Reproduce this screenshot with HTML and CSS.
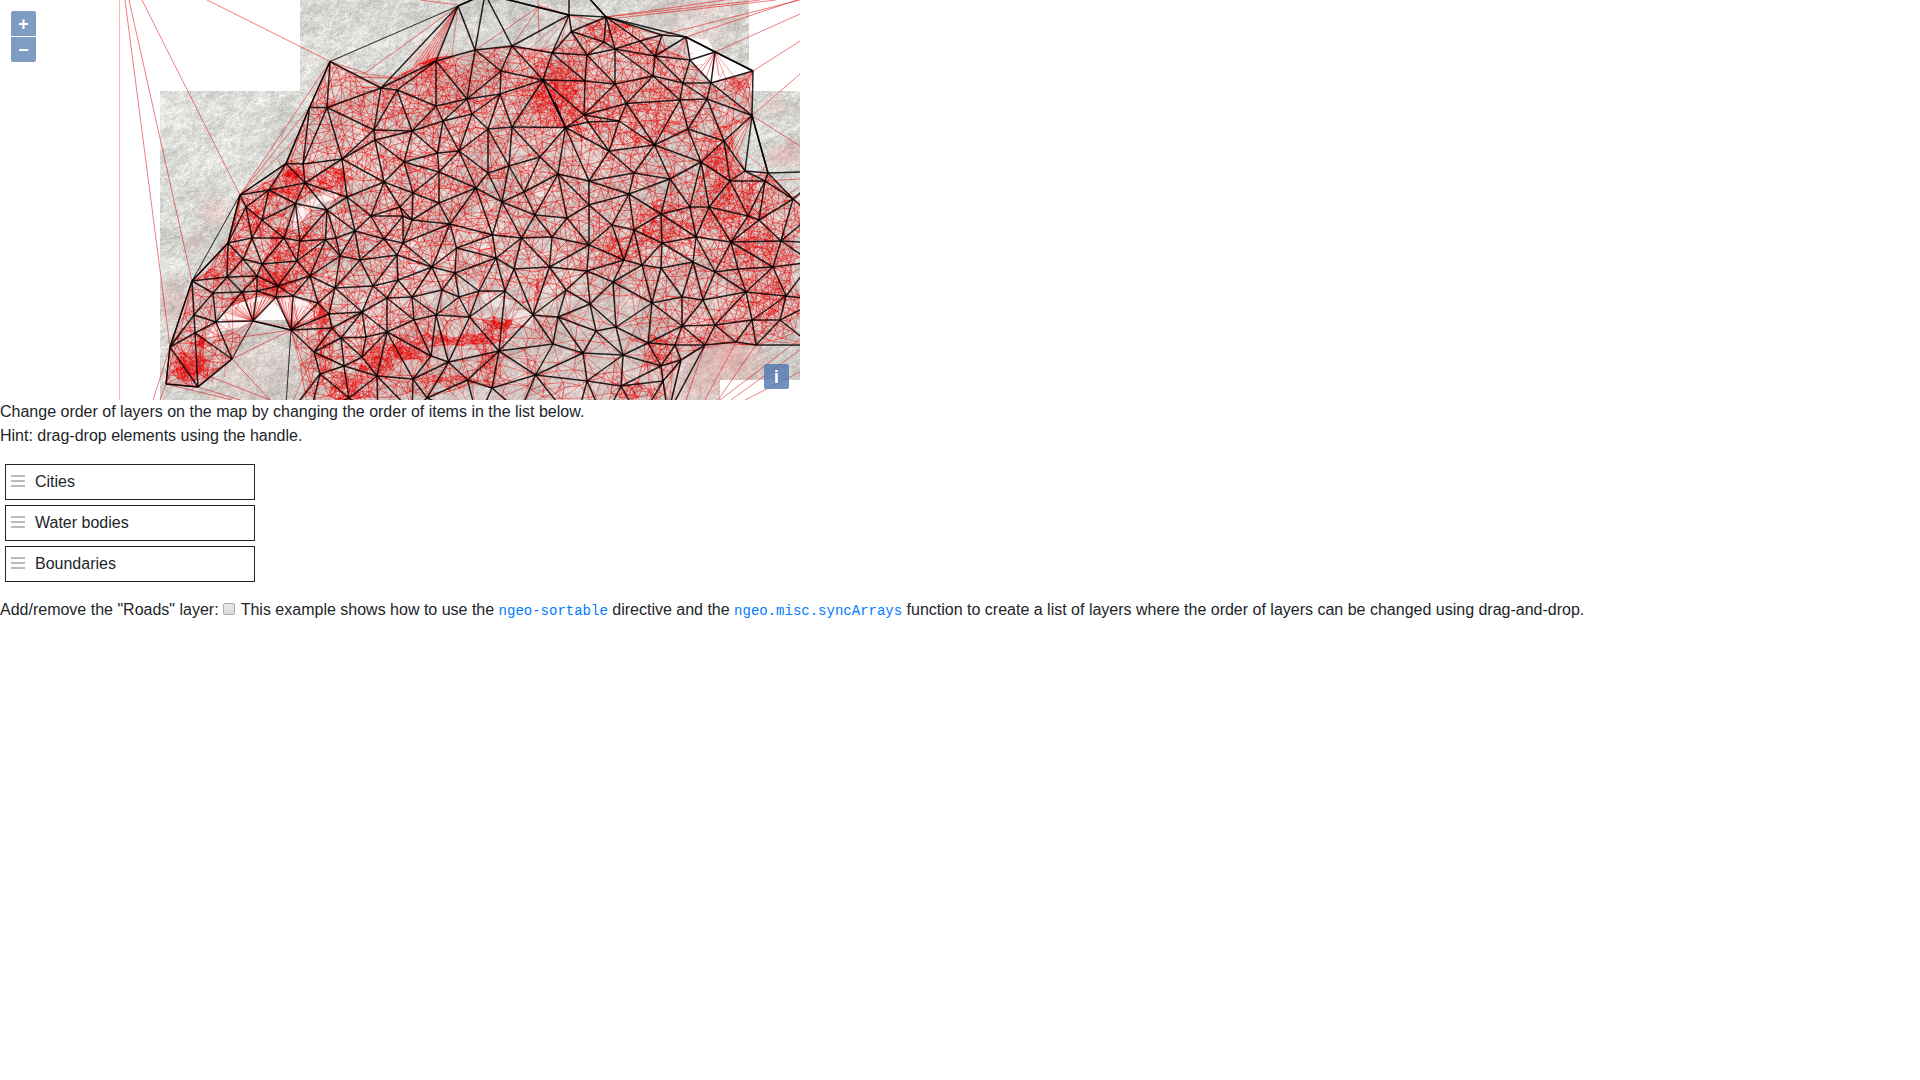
FILE: index.html
```html
<!DOCTYPE html>
<html lang="en">
<head>
<meta charset="utf-8">
<title>Sortable layers example</title>
<link rel="stylesheet" href="styles.css">
</head>
<body>
<div class="map">
  <canvas class="map-canvas" id="map" width="800" height="400"></canvas>
  <div class="zoom-control"><button type="button" title="Zoom in">+</button><button type="button" title="Zoom out">−</button></div>
  <button type="button" class="info-control" title="Attributions">i</button>
</div>
<p class="intro">Change order of layers on the map by changing the order of items in the list below.<br>Hint: drag-drop elements using the handle.</p>
<ul class="layers">
  <li><svg class="handle" viewBox="0 0 14 12"><path d="M0 1h14M0 6h14M0 11h14"/></svg>Cities</li>
  <li><svg class="handle" viewBox="0 0 14 12"><path d="M0 1h14M0 6h14M0 11h14"/></svg>Water bodies</li>
  <li><svg class="handle" viewBox="0 0 14 12"><path d="M0 1h14M0 6h14M0 11h14"/></svg>Boundaries</li>
</ul>
<p class="desc"><label for="roads">Add/remove the "Roads" layer:</label> <input type="checkbox" id="roads"> This example shows how to use the <a><code>ngeo-sortable</code></a> directive and the <a><code>ngeo.misc.syncArrays</code></a> function to create a list of layers where the order of layers can be changed using drag-and-drop.</p>
<script src="map.js"></script>
</body>
</html>
```
FILE: styles.css
```css
*, *::before, *::after { box-sizing: border-box; }
body {
  margin: 0;
  font: 16px/24px "Liberation Sans", Arial, sans-serif;
  color: #212529;
  background: #fff;
}
.map { position: relative; width: 800px; height: 400px; overflow: hidden; }
.map-canvas { display: block; }
.zoom-control { position: absolute; left: 11px; top: 11px; display: grid; gap: 1px; }
.map button {
  display: block;
  width: 25px;
  height: 25px;
  margin: 0;
  padding: 1px 0 0;
  border: 0;
  background: #7f9dc3;
  color: #fff;
  font: bold 18px/24px "Liberation Sans", Arial, sans-serif;
  text-align: center;
}
.zoom-control button:first-child { border-radius: 2px 2px 0 0; }
.zoom-control button:last-child { border-radius: 0 0 2px 2px; }
.map .info-control { position: absolute; right: 11px; bottom: 11px; border-radius: 2px; background: rgba(82, 121, 178, .82); }
.intro { margin: 0 0 16px; }
.layers { display: grid; gap: 5px; width: 250px; margin: 0 0 16px 5px; padding: 0; list-style: none; }
.layers li { display: flex; align-items: center; gap: 10px; height: 36px; padding: 0 5px; border: 1px solid #212529; }
.handle { width: 14px; height: 12px; margin-bottom: 2px; stroke: #bbb; stroke-width: 2; }
.desc { margin: 0; }
.desc input {
  appearance: none;
  width: 12px;
  height: 12px;
  margin: 0 1.5px 0 0;
  border: 1px solid #aaa;
  border-radius: 2px;
  background: linear-gradient(#e9e9e9, #dadada);
}
.desc code { font: 14px "Liberation Mono", "Courier New", monospace; color: #007bff; }
```
FILE: map.js
```javascript
const canvas = document.getElementById('map');
const ctx = canvas.getContext('2d');
let seed = 48271;
const rnd = () => (seed = (seed * 16807) % 2147483647) / 2147483647;

const parse = s => s.trim().split(/\s+/).map(p => p.split(',').map(Number));
const nodes = parse(`
330,61.5 309.5,107.5 327,107.5 381,88 397,90 374,130 375,140 342,159 303,164 286,163.5 269,190 305,183
240,195 347,197 246,207 295.5,203.5 327,210 371,216 262,220 228,243 252,238 284,238 325.5,239.5 300,241
336,238 355,231 384,239 340,256 360,260 397,255 297,261 243,259 262,264 310,276 335,288 373,286 227,277
257,276 278,286 192,281 213,293 242,292 257,291 276,297 293,296 318,303 329,314 362,312 387,298 194,315
216,322 253,321 291,330 332,328 366,337 387,332 195,333 170,347 232,359 166,384 198,387 341,338 314,352
362,357 344,366 320,374 377,376 349,398 458,6 436,61 436,106 475,50 512,46 501,71 500,94 467,99 472,114
543,80 412,131 443,121 437.5,153 459,151 488,129 512,127 404,162 384,182 439,172 488,173 509,166 540,157
413,193 476,188 524,192 400,207 403,216 412,220 439,203 450,224 502,202 535,215 521.5,238 492.5,235
403,243 432,267 456.5,248 455,273 496,258 514,269 549.5,267 398,280 442,290 479,291 459,297 412,297
505,291 436,315 414,320 469.5,317 533,315 431,356 448.5,362 413,379 499,351 535.5,375 467.5,380 492,388
427,398 569,15 571.5,31.5 606,17 604,42 552,53 587,55 615,49 640,41 662,35 686,37 655,56 653,76 690,60
715,52 711,83 683,83 753,71 707,99 680,100 752,115.5 626.5,103.5 615,84 585,81 584,115 588,122 619,121
565.5,127.5 688,129 724,141 609,151 654.5,145 701,162 745,171 768,173 730,181 765,181 558,174 634,173
670,179 589,181 629,194 793,199 589,205 567,218 612,225 634,230 661,214 690,207 709,207 748,216 759,220
781,241 731,242 696,237 662,243 589,245 552,237 624,260 642,265 661,268 693,262 715,272 738,269 773,267
587,271 613,282 566,290 590,304 652,303 682,297 703,300 746,292 786,296 752,320 780,320 715,325 682,326
596,331 616,327 558,317 553,344 648,343 675,345 705,345 736,342 756,345 583,353 623,355 661,366 681,360
587,381 621,386 663,381 485,-6 569,-24 825,171 812,215 818,243 812,262 820,300 812,345 285,420 310,415
378,418 412,412 478,420 520,412 575,425 604,420 640,420 668,414`);

// Delaunay triangulation, sweeping the points from left to right
function triangulate(input) {
  const pts = input.slice().sort((a, b) => a[0] - b[0]);
  const n = pts.length;
  pts.push([-9000, -9000], [400, 18000], [9800, -9000]);
  const circle = (i, j, k) => {
    const [ax, ay] = pts[i], [bx, by] = pts[j], [cx, cy] = pts[k];
    const d = 2 * (ax * (by - cy) + bx * (cy - ay) + cx * (ay - by)) || 1e-9;
    const a = ax * ax + ay * ay, b = bx * bx + by * by, c = cx * cx + cy * cy;
    const x = (a * (by - cy) + b * (cy - ay) + c * (ay - by)) / d;
    const y = (a * (cx - bx) + b * (ax - cx) + c * (bx - ax)) / d;
    return { t: [i, j, k], x, y, r: (ax - x) ** 2 + (ay - y) ** 2 };
  };
  let open = [circle(n, n + 1, n + 2)];
  const done = [];
  for (let p = 0; p < n; p++) {
    const [x, y] = pts[p];
    const border = new Map();
    const next = [];
    for (const c of open) {
      const dx = x - c.x;
      if (dx > 0 && dx * dx > c.r) { done.push(c); continue; }
      if (dx * dx + (y - c.y) ** 2 >= c.r) { next.push(c); continue; }
      for (const [a, b] of [[0, 1], [1, 2], [2, 0]]) {
        const u = Math.min(c.t[a], c.t[b]), v = Math.max(c.t[a], c.t[b]), key = u * 100000 + v;
        if (border.has(key)) border.delete(key); else border.set(key, [u, v]);
      }
    }
    for (const [u, v] of border.values()) next.push(circle(u, v, p));
    open = next;
  }
  const edges = new Map();
  for (const c of done.concat(open)) {
    for (const [a, b] of [[0, 1], [1, 2], [2, 0]]) {
      const u = Math.min(c.t[a], c.t[b]), v = Math.max(c.t[a], c.t[b]);
      if (v < n) edges.set(u * 100000 + v, [pts[u], pts[v]]);
    }
  }
  return [...edges.values()];
}

function polygon(s) {
  const p = new Path2D();
  parse(s).forEach(([x, y], i) => i ? p.lineTo(x, y) : p.moveTo(x, y));
  p.closePath();
  return p;
}

// shaded relief tiles
const image = ctx.createImageData(800, 400);
function valueNoise(w, h) {
  const cols = Math.ceil(1300 / w) + 2, grid = [];
  for (let i = 0; i < cols * (Math.ceil(1300 / h) + 2); i++) grid.push(rnd());
  return (x, y) => {
    const gx = Math.max(0, x / w), gy = y / h, i = Math.floor(gx), j = Math.floor(gy), u = gx - i, v = gy - j;
    const at = (a, b) => grid[b * cols + a];
    return (at(i, j) * (1 - u) + at(i + 1, j) * u) * (1 - v) + (at(i, j + 1) * (1 - u) + at(i + 1, j + 1) * u) * v;
  };
}
const coarse = valueNoise(42, 24), medium = valueNoise(11, 6), fine = valueNoise(3.5, 2);
for (let y = 0; y < 400; y++) {
  for (let x = 0; x < 800; x++) {
    const tile = x >= 300 && x < 749 && y < 91 || x >= 160 && y >= 91 && !(x >= 720 && y >= 380);
    const o = (y * 800 + x) * 4;
    let v = 255;
    if (tile) {
      // ridges run from the lower left to the upper right
      const s = x * .85 - y * .5 + 200, t = x * .5 + y * .85;
      v = 213 + (coarse(s, t) - .5) * 26 + (medium(s, t) - .5) * 26 + (fine(s, t) - .5) * 32 + (rnd() - .5) * 30;
      if (x < 270 && y < 280 || y < 75 && x < 450) v += 6;
      v = Math.min(v, 248);
    }
    const warm = tile && (y < 91 || y > 300);
    image.data[o] = v;
    image.data[o + 1] = warm ? v - 2 : v;
    image.data[o + 2] = tile ? v - (warm ? 6 : 4) : v;
    image.data[o + 3] = 255;
  }
}
ctx.putImageData(image, 0, 0);

// lakes
const lakes = [
  polygon('208,337 222,314 236,304 256,297 277,299 291,297 312,304 320,314 303,324 291,320 255,320 240,327 222,331'),
  polygon('669,35 686,37 708,40 715,52 753,70 712,82 690,60 686,42'),
  polygon('297,209 312,199 330,191 342,190 336,199 318,204 304,217 298,229 291,230')
];
ctx.fillStyle = '#fff';
lakes.forEach(l => ctx.fill(l));
ctx.fillStyle = 'rgba(255,255,255,.6)';
for (const [x, y, a, b, r] of [[445, 256, 14, 5, .3], [486, 247, 8, 3, -.4], [375, 175, 7, 4, 0], [530, 170, 9, 7, 0], [546, 190, 12, 5, -.3], [496, 300, 14, 7, .2], [215, 333, 5, 8, .4], [520, 318, 13, 8, 0], [500, 338, 9, 4, 0]]) {
  ctx.beginPath(); ctx.ellipse(x, y, a, b, r, 0, 7); ctx.fill();
}

// pale red haze where the detailed network continues
function haze(x, y, r, a) {
  const g = ctx.createRadialGradient(x, y, 0, x, y, r);
  g.addColorStop(0, `rgba(240,60,60,${a})`);
  g.addColorStop(1, 'rgba(240,60,60,0)');
  ctx.fillStyle = g;
  ctx.fillRect(x - r, y - r, 2 * r, 2 * r);
}
const land = polygon('330,62 381,86 425,60 470,50 512,44 552,48 571,28 606,17 655,34 690,60 711,82 752,73 752,115 730,150 745,171 770,176 800,198 800,340 756,345 705,345 680,360 662,400 305,400 291,330 276,297 232,359 198,387 166,384 170,347 192,285 228,243 240,197 285,163 309,108');
ctx.save();
ctx.clip(polygon('160,91 300,91 300,0 749,0 749,91 800,91 800,380 720,380 720,400 160,400'));
ctx.save();
ctx.clip(land);
ctx.fillStyle = 'rgba(240,50,50,.06)';
ctx.fillRect(0, 0, 800, 400);
ctx.restore();
for (const h of [[215, 212, 24, .13], [195, 243, 16, .1], [175, 300, 30, .13], [430, 62, 26, .3], [565, 95, 38, .14], [790, 153, 18, .22], [775, 157, 14, .14], [775, 105, 18, .1], [730, 360, 50, .22], [720, 340, 40, .12], [690, 385, 35, .16], [700, 5, 60, .07], [250, 370, 70, .06], [295, 178, 22, .3], [190, 363, 22, .3], [410, 350, 50, .12], [275, 287, 22, .35]]) haze(...h);
ctx.restore();

// density of the detailed mesh: x, y, rx, ry, number of points
const clusters = [
  [555, 102, 26, 30, 160], [550, 75, 45, 28, 110], [588, 118, 25, 14, 35], [428, 60, 15, 5, 40],
  [293, 175, 9, 5, 55], [340, 174, 7, 7, 30], [325, 182, 16, 10, 30], [283, 193, 28, 8, 60], [255, 218, 14, 18, 60],
  [232, 255, 12, 14, 32], [295, 250, 32, 28, 135], [275, 283, 22, 12, 80], [190, 368, 17, 13, 130],
  [201, 342, 4, 5, 35], [213, 275, 10, 8, 18], [240, 302, 18, 6, 30], [393, 353, 28, 8, 100],
  [440, 340, 35, 6, 70], [348, 388, 20, 14, 85], [380, 367, 20, 8, 45], [500, 325, 15, 6, 65],
  [481, 339, 20, 5, 50], [460, 380, 45, 3, 35], [324, 345, 9, 35, 45], [488, 362, 10, 12, 24],
  [537, 290, 3, 12, 14], [618, 250, 20, 16, 42], [665, 225, 35, 22, 95], [720, 160, 14, 32, 85],
  [735, 205, 40, 28, 135], [755, 250, 38, 22, 105], [770, 295, 30, 25, 75], [650, 50, 20, 8, 20],
  [737, 84, 12, 5, 9], [660, 350, 15, 18, 36], [640, 392, 20, 12, 28], [610, 30, 30, 14, 45],
  [320, 312, 8, 12, 35], [423, 195, 90, 70, 130], [420, 90, 90, 35, 130], [645, 115, 50, 40, 120]
];
const detail = nodes.map(p => p.slice());
const inside = (x, y) => ctx.isPointInPath(land, x, y) && !lakes.some(l => ctx.isPointInPath(l, x, y));
for (let y = 2; y < 405; y += 9.5) {
  for (let x = 165; x < 805; x += 9.5) {
    const px = x + (rnd() - .5) * 9, py = y + (rnd() - .5) * 9;
    const alpine = py > 285 && px > 430 && px < 660;
    if (inside(px, py) && (!alpine || rnd() < .4)) detail.push([px, py]);
  }
}
for (const [x, y, rx, ry, n] of clusters) {
  for (let i = 0; i < n; i++) {
    const a = rnd() * 6.2832, d = Math.sqrt(rnd()) * (.6 + rnd() * .8);
    const px = x + Math.cos(a) * d * rx, py = y + Math.sin(a) * d * ry;
    if (inside(px, py)) detail.push([px, py]);
  }
}
const length = ([a, b]) => Math.hypot(a[0] - b[0], a[1] - b[1]);
const line = (a, b) => { ctx.beginPath(); ctx.moveTo(...a); ctx.lineTo(...b); ctx.stroke(); };
const mesh = triangulate(detail).filter(e => length(e) < 52);
ctx.lineWidth = .9;
for (const e of mesh) {
  const len = length(e);
  ctx.strokeStyle = `rgba(232,0,0,${len < 7 ? .58 : len < 16 ? .57 : .42})`;
  line(...e);
}
// minor roads crossing between nearby points of the mesh
ctx.strokeStyle = 'rgba(232,0,0,.34)';
ctx.lineWidth = .8;
for (let i = 0; i < mesh.length; i += 2) {
  const [a, b] = mesh[i];
  if (length(mesh[i]) > 17) continue;
  const dx = (b[0] - a[0]) * .6, dy = (b[1] - a[1]) * .6;
  line([a[0] - dy, a[1] + dx], [b[0] + dy, b[1] - dx]);
}

// links that leave the country
ctx.lineWidth = 1;
ctx.strokeStyle = 'rgba(228,20,20,.55)';
for (const s of [
  '125,0 170,347', '129,0 192,281', '142,0 240,195', '207,0 330,61.5', '330,61.5 240,195', '327,107 240,195',
  '309,108 240,195', '330,61.5 365,73', '365,73 458,6', '365,73 381,88', '420,0 458,5', '170,347 153,400',
  '166,384 160,400', '166,384 232,400', '198,387 240,400', '232,359 270,400', '232,359 291,330', '206,375 270,400',
  '214,341 291,330', '291,330 316,400', '475,50 540,6', '512,46 540,6', '540,6 569,15', '538,0 539,36', '606,17 725,0',
  '606,17 760,0', '609,19 776,0', '662,35 800,0', '686,37 800,-1', '715,52 800,14', '753,71 800,41', '752,115.5 800,74',
  '752,115.5 800,146', '793,199 800,194', '766,181 800,179', '705,345 686,400', '736,342 705,400', '756,345 718,400',
  '800,339 720,400', '800,350 731,400', '800,372 745,400', '681,360 672,400', '663,381 668,400', '253,321 222,320',
  '752,115.5 733,152', '752,115.5 735,160', '752,115.5 727,148', '752,115.5 718,130', '753,71 730,92', '753,71 738,95',
  '753,71 742,98', '715,52 700,74', '715,52 706,78', '715,52 719,76', '686,37 676,52', '686,37 684,55'
]) line(...parse(s));
ctx.strokeStyle = 'rgba(228,20,20,.28)';
line([119.5, 0], [119.5, 400]);
ctx.strokeStyle = 'rgba(228,20,20,.5)';
for (let i = 0; i < 13; i++) {
  line([253, 321], [222 + i * 4, 311 - i * 1.1]);
  line([291, 330], [278 + i * 3.4, 298 + i * 1.4]);
  if (i % 2) line([458, 6], [412 + i * 2, 66 - i * .5]);
}

// country-wide triangulation
ctx.strokeStyle = 'rgba(0,0,0,.84)';
ctx.lineWidth = 1.5;
const outer = parse('330,61.5 309.5,107.5 286,163.5 240,195 228,243 192,281 170,347 166,384 198,387 232,359 253,321 291,330 285,420');
for (const [a, b] of triangulate(nodes)) {
  const mx = (a[0] + b[0]) / 2, my = (a[1] + b[1]) / 2;
  const len = length([a, b]);
  if (len > 92 || mx < 290 && my > 333 && a[0] < 240 && b[0] > 240) continue;
  if (mx > 755 && my < 165 && len > 60) continue;
  line(a, b);
}
for (const s of ['458,6 485,-6', '381,88 458,6', '485,-6 569,15', '569,-24 606,17', '606,17 686,37', '752,115.5 768,173', '555,102 565.5,127.5', '543,80 565.5,127.5']) line(...parse(s));
ctx.strokeStyle = 'rgba(0,0,0,.72)';
ctx.lineWidth = 1.1;
for (let i = 1; i < outer.length; i++) line(outer[i - 1], outer[i]);
for (const s of ['330,61.5 458,6', '192,281 240,195']) line(...parse(s));
```
